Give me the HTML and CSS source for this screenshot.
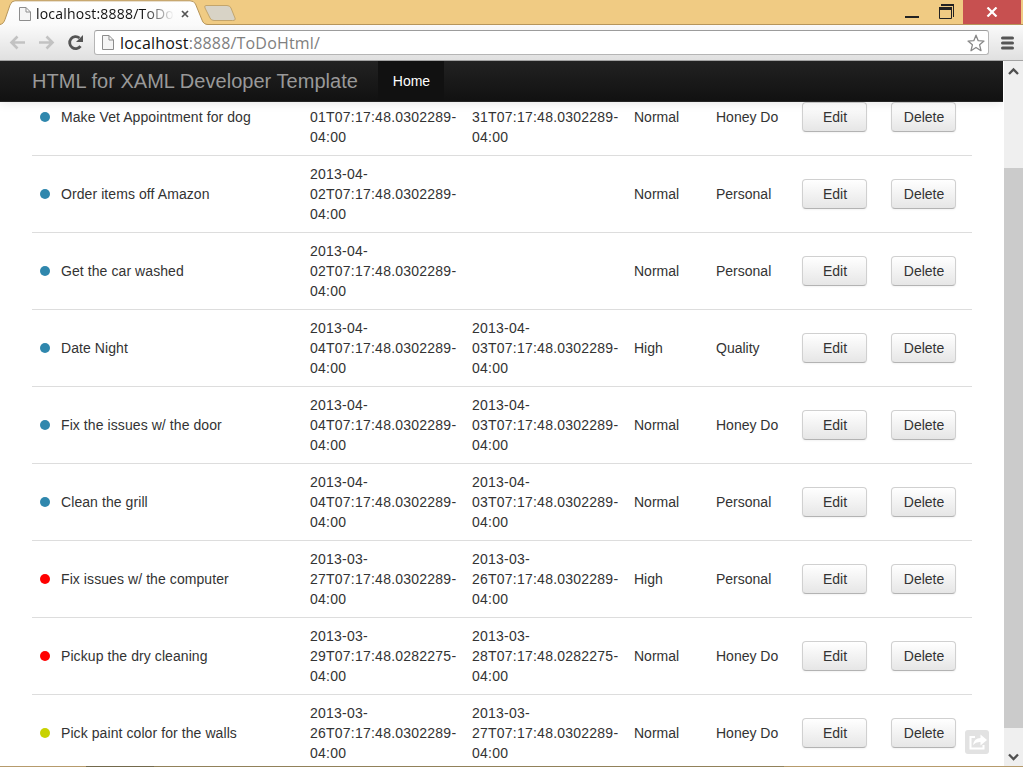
FILE: index.html
```html
<!DOCTYPE html>
<html lang="en">
<head>
<meta charset="utf-8">
<title>HTML for XAML Developer Template</title>
<link rel="stylesheet" href="styles.css">
</head>
<body>
<div class="window">
  <header class="titlebar">
    <svg class="tabs" width="250" height="25" viewBox="0 0 250 25">
      <defs><linearGradient id="tab" x1="0" y1="0" x2="0" y2="1"><stop offset="0" stop-color="#fff"/><stop offset="1" stop-color="#fafafa"/></linearGradient></defs>
      <path d="M0 24.500C3 24 4 22 5 19.500L10 5Q11.500 .8 15 .8H190Q194 .8 195.500 4L202 20Q203.500 24.500 208 24.500V26H0Z" fill="url(#tab)" stroke="#b6955a"/>
      <path d="M206 5.500H227Q230 5.500 231 8L235 18Q236 20.500 232.500 20.500H214Q211 20.500 210 18L205 8Q204 5.500 206 5.500Z" fill="#d8d3c6" stroke="#c3a56c"/>
    </svg>
    <div class="tab">
      <svg class="page" width="12" height="14" viewBox="0 0 12 14"><path d="M.5.5H7L11.500 5V13.500H.5ZM7 .5V5H11.500" fill="#f5f5f5" stroke="#8d8d8d"/></svg>
      <span class="tab-title">localhost:8888/ToDo</span>
      <svg class="tab-close" width="8" height="8" viewBox="0 0 8 8"><path d="M1 1L7 7M7 1L1 7" stroke="#555" stroke-width="1.700"/></svg>
    </div>
    <div class="controls">
      <svg width="60" height="24" viewBox="0 0 60 24"><path d="M2 16H16V18H2Z" fill="#222"/><path d="M38 4.500H50.500V17" fill="none" stroke="#222"/><path d="M38 4H51V6H38ZM36 7H49V10H36Z" fill="#222"/><path d="M36.500 7.500H48.500V18.500H36.500Z" fill="none" stroke="#222"/></svg>
      <div class="close"><svg width="12" height="10" viewBox="0 0 12 10"><path d="M1.500.5L10.500 9.500M10.500.5L1.500 9.500" stroke="#fff" stroke-width="2.200"/></svg></div>
    </div>
  </header>
  <div class="toolbar">
    <svg class="nav-icons" width="86" height="35" viewBox="0 0 86 35">
      <g fill="none" stroke="#c2c2c2" stroke-width="2.600"><path d="M25 17.500H12M17.500 11.500L11.500 17.500L17.500 23.500M39 17.500H52M46.500 11.500L52.500 17.500L46.500 23.500"/></g>
      <path d="M80.500 21.200A6 6 0 1 1 79.500 13" fill="none" stroke="#555" stroke-width="2.800"/><path d="M83 10V17H76Z" fill="#555"/>
    </svg>
    <div class="address">
      <svg width="12" height="15" viewBox="0 0 12 15"><path d="M.5.5H7L11.500 5V14.500H.5ZM7 .5V5H11.500" fill="#f5f5f5" stroke="#8d8d8d"/></svg>
      <span class="url"><b>localhost</b>:8888/ToDoHtml/</span>
      <svg class="star" width="18" height="18" viewBox="0 0 18 18"><path d="M9 1.200L11.200 6.700L17 7.100L12.600 10.800L14 16.700L9 13.500L4 16.700L5.400 10.800L1 7.100L6.800 6.700Z" fill="#fff" stroke="#888" stroke-width="1.300" stroke-linejoin="round"/></svg>
    </div>
    <svg class="menu" width="13" height="14" viewBox="0 0 13 14"><path d="M1.500 2H11.500M1.500 7H11.500M1.500 12H11.500" stroke="#555" stroke-width="3" stroke-linecap="round"/></svg>
  </div>
  <div class="viewport">
    <main class="page-body">
      <nav class="navbar"><span class="brand">HTML for XAML Developer Template</span><span class="active">Home</span></nav>
      <div class="tasks" id="tasks"></div>
      <div class="share"><svg width="24" height="24" viewBox="0 0 24 24"><path d="M10 7H5.500V18.500H18.500V15" fill="none" stroke="#fff" stroke-width="2"/><path d="M8 15Q9 8 15.500 8V4.500L22 10L15.500 15.500V12Q11 11.500 8 15Z" fill="#fff"/></svg></div>
    </main>
    <aside class="scrollbar">
      <svg width="19" height="20" viewBox="0 0 19 20"><path d="M5 13L9.500 8.500L14 13" fill="none" stroke="#505050" stroke-width="2.300"/></svg>
      <div class="thumb"></div>
      <svg width="19" height="18" viewBox="0 0 19 18"><path d="M5 6.500L9.500 11L14 6.500" fill="none" stroke="#505050" stroke-width="2.300"/></svg>
    </aside>
  </div>
  <div class="edge"></div>
</div>
<script src="tasks.js"></script>
</body>
</html>
```
FILE: styles.css
```css
* { box-sizing: border-box; }
body { margin: 0; font: 14px/20px "Liberation Sans", Arial, sans-serif; color: #333; }
svg { display: block; flex: none; }
.window { height: 768px; display: flex; flex-direction: column; overflow: hidden; background: #fff; }
.titlebar { position: relative; height: 25px; flex: none; display: flex; justify-content: space-between; background: #f0cb83; border-bottom: 1px solid #b6955a; }
.tabs { position: absolute; left: 0; top: 0; }
.tab { position: relative; display: flex; align-items: center; height: 26px; padding: 2px 0 0 19px; color: #111; }
.tab-title { width: 138px; margin: -2px 7px 0 5px; overflow: hidden; white-space: nowrap; font: 14px "Open Sans", sans-serif; letter-spacing: .2px; -webkit-mask-image: linear-gradient(90deg, #000 78%, transparent); }
.controls { display: flex; }
.close { width: 58px; margin-right: 2px; height: 24px; display: flex; align-items: center; justify-content: center; background: #c75050; }
.toolbar { height: 36px; flex: none; display: flex; background: linear-gradient(#fafafa, #e0e0e0); border-bottom: 1px solid #a3a3a3; }
.nav-icons { margin-right: 8px; }
.address { width: 895px; height: 25px; margin-top: 5px; padding: 0 3px 0 7px; display: flex; align-items: center; background: #fff; border: 1px solid #b5b5b5; border-top-color: #9c9c9c; border-radius: 3px; }
.url { flex: 1; margin-left: 6px; font: 16px "Open Sans", sans-serif; letter-spacing: .19px; color: #808080; }
.url b { font-weight: 400; color: #111; }
.menu { margin: 11px 0 0 12px; }
.viewport { height: 705px; flex: none; display: flex; }
.page-body { position: relative; width: 1003px; height: 705px; overflow: hidden; }
.navbar { position: absolute; inset: 0 0 auto; height: 41px; display: flex; background: linear-gradient(#222, #111); border-bottom: 1px solid #252525; box-shadow: 0 1px 10px rgba(0,0,0,.1); line-height: 40px; z-index: 1; }
.brand { width: 346px; padding-left: 32px; margin-right: 32px; font-size: 20px; letter-spacing: .03px; white-space: nowrap; color: #999; }
.active { width: 66px; padding-left: 1px; text-align: center; color: #fff; background: #111; }
.tasks { width: 940px; margin: 17px 0 0 32px; }
.task { height: 77px; border-top: 1px solid #ddd; display: grid; grid-template-columns: 270px 162px 162px 82px 86px 89px 89px; align-items: center; }
.cell { padding-left: 8px; white-space: nowrap; }
.name { display: flex; align-items: center; gap: 11px; letter-spacing: .08px; }
.date { letter-spacing: .23px; }
.dot { width: 10px; height: 10px; border-radius: 50%; background: #2f87ad; }
.dot.late { background: #f00; }
.dot.done { background: #c8d200; }
.button { width: 65px; height: 30px; padding-left: 1px; line-height: 28px; text-align: center; border: 1px solid #d0d0d0; border-bottom-color: #b3b3b3; border-radius: 4px; background: linear-gradient(#fff, #e6e6e6); box-shadow: inset 0 1px 0 rgba(255,255,255,.2), 0 1px 2px rgba(0,0,0,.05); }
.share { position: absolute; left: 965px; top: 669px; width: 24px; height: 24px; border-radius: 3px; background: #e2e2e2; }
.scrollbar { width: 20px; padding-left: 1px; background: #efefef; box-shadow: inset 1px 0 #fff; }
.thumb { height: 560px; margin: 87px 0 20px; background: #cbcbcb; }
.edge { height: 1px; flex: none; background: linear-gradient(90deg, #b69b6c 86px, #73694c 86px 154px, #91815a 154px 784px, #b69b6c 784px); }
```
FILE: tasks.js
```js
const time = "T07:17:48.0302289-";
const tasks = [
  ["", "Make Vet Appointment for dog", "|01" + time, "|31" + time, "Normal", "Honey Do"],
  ["", "Order items off Amazon", "2013-04-|02" + time, "", "Normal", "Personal"],
  ["", "Get the car washed", "2013-04-|02" + time, "", "Normal", "Personal"],
  ["", "Date Night", "2013-04-|04" + time, "2013-04-|03" + time, "High", "Quality"],
  ["", "Fix the issues w/ the door", "2013-04-|04" + time, "2013-04-|03" + time, "Normal", "Honey Do"],
  ["", "Clean the grill", "2013-04-|04" + time, "2013-04-|03" + time, "Normal", "Personal"],
  ["late", "Fix issues w/ the computer", "2013-03-|27" + time, "2013-03-|26" + time, "High", "Personal"],
  ["late", "Pickup the dry cleaning", "2013-03-|29T07:17:48.0282275-", "2013-03-|28T07:17:48.0282275-", "Normal", "Honey Do"],
  ["done", "Pick paint color for the walls", "2013-03-|26" + time, "2013-03-|27" + time, "Normal", "Honey Do"]
];
const date = d => d ? d.replace("|", "<br>") + "<br>04:00" : "";
document.getElementById("tasks").innerHTML = tasks.map(t => `<div class="task">
  <div class="cell name"><i class="dot ${t[0]}"></i><span>${t[1]}</span></div>
  <div class="cell date">${date(t[2])}</div><div class="cell date">${date(t[3])}</div>
  <div class="cell">${t[4]}</div><div class="cell">${t[5]}</div>
  <div class="cell"><div class="button">Edit</div></div><div class="cell"><div class="button">Delete</div></div>
</div>`).join("");
```
